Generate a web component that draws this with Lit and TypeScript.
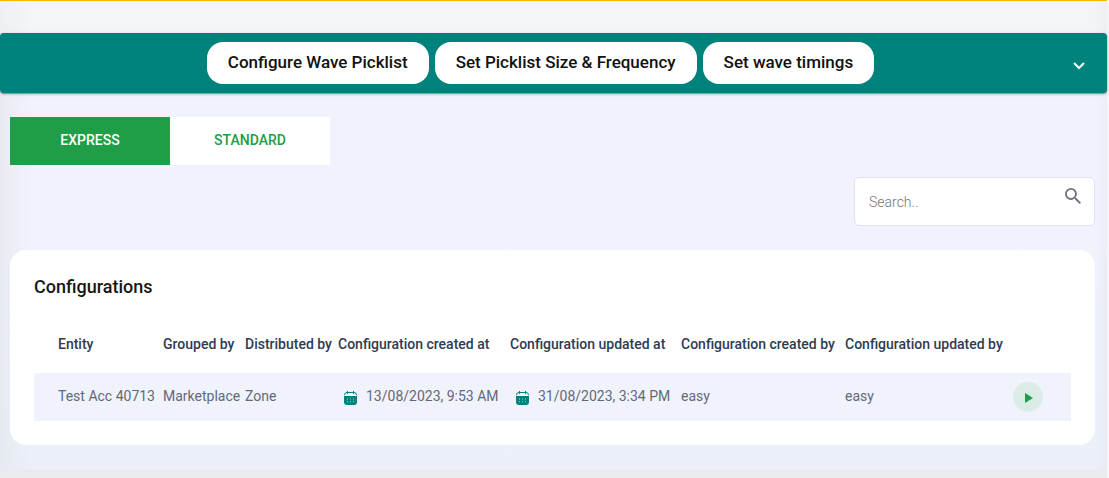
import { LitElement, html, css } from "lit";
import { customElement, state } from "lit/decorators.js";

interface Configuration {
  entity: string;
  groupedBy: string;
  distributedBy: string;
  createdAt: string;
  updatedAt: string;
  createdBy: string;
  updatedBy: string;
}

const ACTIONS = ["Configure Wave Picklist", "Set Picklist Size & Frequency", "Set wave timings"];
const TABS = ["EXPRESS", "STANDARD"];
const ROWS: Configuration[] = [
  {
    entity: "Test Acc 40713",
    groupedBy: "Marketplace",
    distributedBy: "Zone",
    createdAt: "13/08/2023, 9:53 AM",
    updatedAt: "31/08/2023, 3:34 PM",
    createdBy: "easy",
    updatedBy: "easy",
  },
];

const calendarIcon = html`<svg class="calendar" viewBox="0 0 13 14" width="13" height="14" aria-hidden="true">
  <path d="M0 5h13v6a3 3 0 0 1-3 3H3a3 3 0 0 1-3-3z" fill="#00827c" />
  <path d="M.5 4.200V4A2.500 2.500 0 0 1 3 1.500h7A2.500 2.500 0 0 1 12.500 4v.2" fill="none" stroke="#00827c" />
  <path d="M3.500 .3v2.200M9.500 .3v2.200" stroke="#00827c" stroke-linecap="round" />
  <path d="M3 8h1M6 8h1M9 8h1M3 10.700h1M6 10.700h1M9 10.700h1" stroke="#a5d0cf" />
</svg>`;

@customElement("app-root")
export class AppRoot extends LitElement {
  @state() private tab = "EXPRESS";

  static styles = css`
    :host {
      display: flex;
      flex-direction: column;
      box-sizing: border-box;
      min-height: 100vh;
      padding-right: 2px;
      font-family: Roboto, sans-serif;
      font-size: 14px;
      line-height: 20px;
      background: linear-gradient(to left, #f4f5f8 2px, rgba(60, 60, 60, 0.03) 2px, transparent 15px),
        linear-gradient(to right, rgba(90, 90, 60, 0.05), transparent 34px), #f0f3fc;
    }
    * {
      box-sizing: border-box;
    }
    button,
    input {
      font: inherit;
      border: 0;
      margin: 0;
    }
    button {
      cursor: pointer;
    }
    .top {
      height: 33px;
      border-top: 1px solid #fbb500;
      background: linear-gradient(to left, rgba(60, 60, 60, 0.03), transparent 15px),
        linear-gradient(to right, rgba(60, 60, 60, 0.03), transparent 34px), #f4f5f7;
    }
    .bar {
      display: flex;
      align-items: center;
      padding: 9px 16px 9px 0;
      background: #00827c;
      border-radius: 4px;
      box-shadow: 0 1px 3px rgba(0, 0, 0, 0.3), 0 1px 1px rgba(0, 0, 0, 0.25);
    }
    .actions {
      flex: 1;
      display: flex;
      justify-content: center;
      gap: 6px;
      padding-left: 14px;
    }
    .action {
      height: 42px;
      padding: 0 21px 2px;
      border-radius: 16px;
      background: #fff;
      color: #111;
      font-size: 17px;
      font-weight: 500;
    }
    .toggle {
      display: flex;
      padding: 6px 0 0;
      background: none;
      width: 24px;
      justify-content: center;
    }
    main {
      padding: 24px 12px 24px 10px;
      background: linear-gradient(transparent 40%, rgba(225, 229, 238, 0.25));
    }
    .tabs {
      display: flex;
    }
    .tab {
      width: 160px;
      height: 48px;
      padding: 0 0 2px;
      background: #fff;
      color: #209e47;
      font-weight: 500;
    }
    .tab.active {
      background: #209e47;
      color: #fff;
    }
    .search {
      display: flex;
      align-items: flex-start;
      width: 241px;
      height: 49px;
      margin: 12px 0 24px auto;
      padding: 0 13px 0 14px;
      border: 1px solid #dfe1f3;
      border-radius: 5px;
      background: #fff;
    }
    .search input {
      flex: 1;
      min-width: 0;
      height: 47px;
      padding: 0;
      outline: none;
      background: none;
      color: #4d5463;
      font-weight: 300;
    }
    .search input::placeholder {
      color: #757575;
      opacity: 1;
    }
    .search svg {
      margin-top: 10px;
    }
    .card {
      padding: 24px;
      border-radius: 16px;
      background: #fff;
    }
    h2 {
      margin: 0 0 27px;
      font-size: 18px;
      line-height: 26px;
      font-weight: 500;
      color: #161616;
    }
    table {
      width: 100%;
      table-layout: fixed;
      border-collapse: collapse;
      text-align: left;
      white-space: nowrap;
    }
    th,
    td {
      padding: 0;
    }
    th {
      height: 46px;
      padding-bottom: 12px;
      color: #2f3b52;
      font-weight: 500;
    }
    td {
      height: 48px;
      padding-bottom: 2px;
      color: #626978;
    }
    tbody tr {
      background: #f0f3fb;
    }
    th:first-child,
    td:first-child {
      padding-left: 24px;
    }
    .c1 { width: 129px; }
    .c2 { width: 82px; }
    .c3 { width: 93px; }
    .c4 { width: 172px; }
    .c5 { width: 171px; }
    .c6 { width: 164px; }
    .c7 { width: 168px; }
    .date {
      display: flex;
      align-items: center;
      gap: 9px;
      padding-left: 6px;
    }
    .calendar {
      flex: none;
      margin-top: 4px;
    }
    td.run {
      padding: 0;
    }
    .play {
      display: grid;
      place-items: center;
      width: 30px;
      height: 30px;
      padding: 1px 0 0 2px;
      border-radius: 50%;
      background: #dbece7;
    }
    footer {
      flex: 1;
      background: #eaebef;
    }
  `;

  render() {
    return html`
      <div class="top"></div>
      <header class="bar">
        <div class="actions">${ACTIONS.map((a) => html`<button class="action">${a}</button>`)}</div>
        <button class="toggle" aria-label="Expand">
          <svg width="12" height="8" viewBox="0 0 12 8" fill="none" stroke="#fff" stroke-width="2">
            <path d="M1 1l5 5 5-5" />
          </svg>
        </button>
      </header>
      <main>
        <div class="tabs" role="tablist">
          ${TABS.map(
            (t) => html`<button
              class="tab ${t === this.tab ? "active" : ""}"
              role="tab"
              aria-selected=${t === this.tab}
              @click=${() => (this.tab = t)}
            >${t}</button>`
          )}
        </div>
        <label class="search">
          <input type="text" placeholder="Search.." aria-label="Search" />
          <svg width="16" height="16" viewBox="3 3 17.500 17.500" fill="#6b7280">
            <path
              d="M15.500 14h-.79l-.28-.27A6.471 6.471 0 0 0 16 9.500 6.500 6.500 0 1 0 9.500 16c1.610 0 3.090-.59 4.230-1.570l.27.28v.79l5 4.990L20.490 19l-4.990-5zm-6 0C7.010 14 5 11.990 5 9.500S7.010 5 9.500 5 14 7.010 14 9.500 11.990 14 9.500 14z"
            />
          </svg>
        </label>
        <section class="card">
          <h2>Configurations</h2>
          <table>
            <colgroup>
              <col class="c1" /><col class="c2" /><col class="c3" /><col class="c4" />
              <col class="c5" /><col class="c6" /><col class="c7" /><col />
            </colgroup>
            <thead>
              <tr>
                <th>Entity</th>
                <th>Grouped by</th>
                <th>Distributed by</th>
                <th>Configuration created at</th>
                <th>Configuration updated at</th>
                <th>Configuration created by</th>
                <th>Configuration updated by</th>
                <th></th>
              </tr>
            </thead>
            <tbody>
              ${ROWS.map(
                (r) => html`<tr>
                  <td>${r.entity}</td>
                  <td>${r.groupedBy}</td>
                  <td>${r.distributedBy}</td>
                  <td><div class="date">${calendarIcon}<span>${r.createdAt}</span></div></td>
                  <td><div class="date">${calendarIcon}<span>${r.updatedAt}</span></div></td>
                  <td>${r.createdBy}</td>
                  <td>${r.updatedBy}</td>
                  <td class="run">
                    <button class="play" aria-label="Run">
                      <svg width="8" height="10" viewBox="0 0 8 10"><path d="M0 0l8 5-8 5z" fill="#209e47" /></svg>
                    </button>
                  </td>
                </tr>`
              )}
            </tbody>
          </table>
        </section>
      </main>
      <footer></footer>
    `;
  }
}
